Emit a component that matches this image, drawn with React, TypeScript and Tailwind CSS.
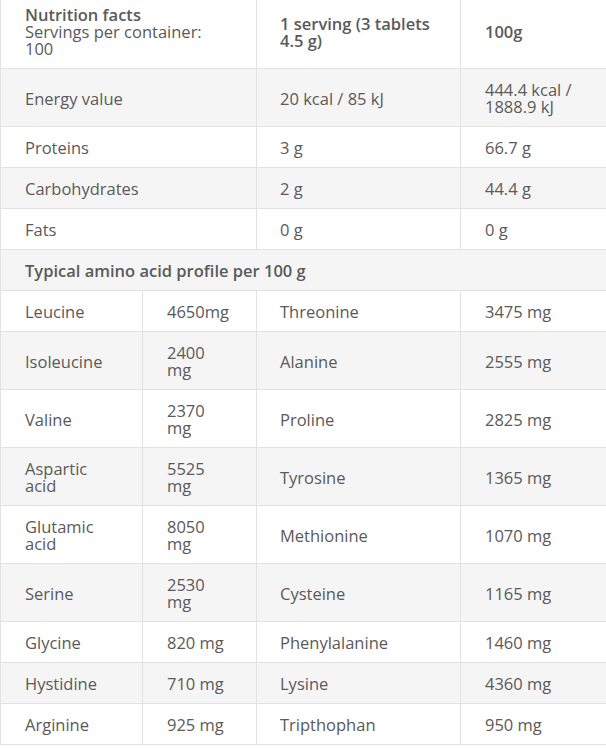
import React from 'react';

type AminoRow = [string, string, string, string];

const basics: [string, string, string][] = [
  ['Energy value', '20 kcal / 85 kJ', '444.4 kcal /\n1888.9 kJ'],
  ['Proteins', '3 g', '66.7 g'],
  ['Carbohydrates', '2 g', '44.4 g'],
  ['Fats', '0 g', '0 g'],
];

const aminos: AminoRow[] = [
  ['Leucine', '4650mg', 'Threonine', '3475 mg'],
  ['Isoleucine', '2400\nmg', 'Alanine', '2555 mg'],
  ['Valine', '2370\nmg', 'Proline', '2825 mg'],
  ['Aspartic\nacid', '5525\nmg', 'Tyrosine', '1365 mg'],
  ['Glutamic\nacid', '8050\nmg', 'Methionine', '1070 mg'],
  ['Serine', '2530\nmg', 'Cysteine', '1165 mg'],
  ['Glycine', '820 mg', 'Phenylalanine', '1460 mg'],
  ['Hystidine', '710 mg', 'Lysine', '4360 mg'],
  ['Arginine', '925 mg', 'Tripthophan', '950 mg'],
];

const cell = 'border border-[#e2e2e2] pl-6 pr-3 pt-3 pb-[11px] align-middle whitespace-pre';
const head = 'border border-[#e2e2e2] border-t-0 pl-6 pr-3 pt-[6px] pb-[11px] align-middle';

function Cell({ text, span, className = '' }: { text: string; span?: number; className?: string }) {
  return (
    <td colSpan={span} className={`${cell} ${className}`}>
      {text}
    </td>
  );
}

export default function App() {
  let stripe = 0;
  const rowBg = () => (stripe++ % 2 === 0 ? 'bg-white' : 'bg-[#f5f5f5]');

  return (
    <div className="w-[606px] h-[750px] overflow-hidden bg-white">
      <table
        className="table-fixed border-collapse w-[608px] text-[16.5px] leading-[17px] text-[#5a5a5a]"
        style={{ fontFamily: '"Open Sans", "Noto Sans", sans-serif' }}
      >
        <colgroup>
          <col className="w-[142px]" />
          <col className="w-[114px]" />
          <col className="w-[204px]" />
          <col className="w-[148px]" />
        </colgroup>
        <tbody>
          <tr className={rowBg()}>
            <td colSpan={2} className={head}>
              <span className="font-semibold">Nutrition facts</span>
              <br />
              Servings per container:
              <br />
              100
            </td>
            <td className={`${head} font-semibold pl-[23px]`}>
              1 serving (3 tablets
              <br />
              4.5 g)
            </td>
            <td className={`${head} font-semibold`}>100g</td>
          </tr>
          {basics.map(([name, serving, per100]) => (
            <tr key={name} className={rowBg()}>
              <Cell text={name} span={2} />
              <Cell text={serving} className="pl-[23px]" />
              <Cell text={per100} />
            </tr>
          ))}
          <tr className={rowBg()}>
            <Cell text="Typical amino acid profile per 100 g" span={4} className="font-semibold" />
          </tr>
          {aminos.map(([a, av, b, bv]) => (
            <tr key={a} className={rowBg()}>
              <Cell text={a} />
              <Cell text={av} />
              <Cell text={b} className="pl-[23px]" />
              <Cell text={bv} />
            </tr>
          ))}
        </tbody>
      </table>
    </div>
  );
}
